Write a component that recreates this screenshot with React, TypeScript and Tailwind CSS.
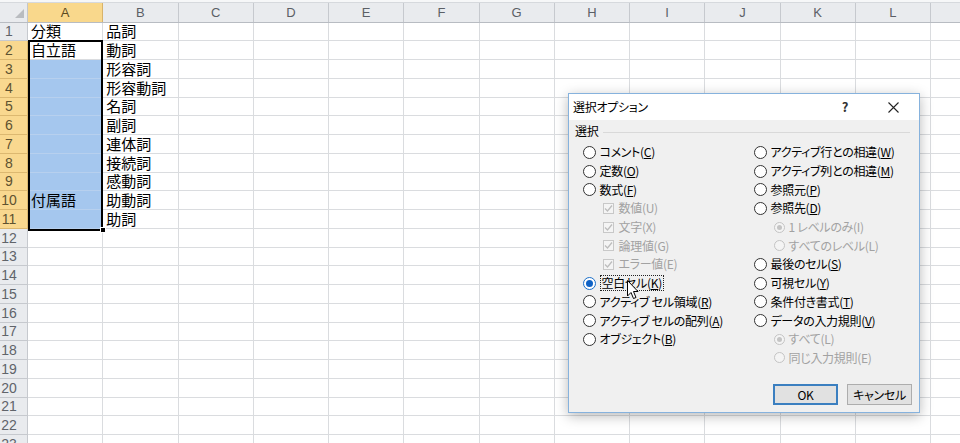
import React from 'react';

const COLS = ['A', 'B', 'C', 'D', 'E', 'F', 'G', 'H', 'I', 'J', 'K', 'L', 'M'];
const DATA: Record<number, [string, string]> = {
  1: ['分類', '品詞'],
  2: ['自立語', '動詞'],
  3: ['', '形容詞'],
  4: ['', '形容動詞'],
  5: ['', '名詞'],
  6: ['', '副詞'],
  7: ['', '連体詞'],
  8: ['', '接続詞'],
  9: ['', '感動詞'],
  10: ['付属語', '助動詞'],
  11: ['', '助詞'],
};
const ROWS = Array.from({ length: 23 }, (_, i) => i + 1);

function Sheet() {
  return (
    <div className="flex flex-col">
      <div className="h-[3px] bg-[#f6f7f8] border-b border-[#d6d9dd]" />
      <div className="flex h-[19.5px] border-b border-[#b8bcc2]">
        <div className="w-[28px] shrink-0 relative bg-[#e9ebee] border-r border-[#c3c6cb]">
          <svg className="absolute left-[15px] top-[6px]" width="9" height="9" viewBox="0 0 9 9">
            <polygon points="9,0 9,9 0,9" fill="#b9bcc0" />
          </svg>
        </div>
        {COLS.map((c) => (
          <div
            key={c}
            className={
              c === 'A'
                ? 'w-[75.25px] shrink-0 flex items-center justify-center border-r border-[#d8b36a] bg-[#f9d88c] text-[13px] text-[#5a4a20]'
                : 'w-[75.25px] shrink-0 flex items-center justify-center border-r border-[#c6c9ce] bg-[#e9ebee] text-[13px] text-[#5b5f66]'
            }
          >
            {c === 'M' ? '' : c}
          </div>
        ))}
      </div>
      {ROWS.map((r) => {
        const sel = r >= 2 && r <= 11;
        const d = DATA[r];
        return (
          <div key={r} className="flex h-[18.75px] shrink-0">
            <div
              className={
                sel
                  ? 'w-[28px] shrink-0 flex items-center justify-center pr-[9px] border-r border-b border-[#dcb870] bg-[#f9d88f] text-[14px] text-[#5e5230] leading-none'
                  : 'w-[28px] shrink-0 flex items-center justify-center pr-[9px] border-r border-b border-[#c6c9ce] bg-[#e9ebee] text-[14px] text-[#60646a] leading-none'
              }
            >
              {r}
            </div>
            {COLS.map((c, ci) => {
              const blue = c === 'A' && r >= 3 && r <= 11;
              const txt = d && ci < 2 ? d[ci] : '';
              return (
                <div
                  key={c}
                  className={
                    blue
                      ? 'w-[75.25px] shrink-0 flex items-center pl-[3px] pt-[1px] border-r border-b border-[#b7d0ee] bg-[#a5c7ee] text-[15px] leading-none text-black whitespace-nowrap'
                      : 'w-[75.25px] shrink-0 flex items-center pl-[3px] pt-[1px] border-r border-b border-[#dadcdf] bg-white text-[15px] leading-none text-black whitespace-nowrap'
                  }
                >
                  {txt}
                </div>
              );
            })}
          </div>
        );
      })}
    </div>
  );
}

function Radio({ checked, disabled, small }: { checked?: boolean; disabled?: boolean; small?: boolean }) {
  const size = small ? 'w-[11px] h-[11px]' : 'w-[13px] h-[13px]';
  if (disabled) {
    return (
      <div className={`${size} shrink-0 rounded-full border border-[#c4c4c4] bg-[#f4f4f4] flex items-center justify-center`}>
        {checked && <div className="w-[5px] h-[5px] rounded-full bg-[#c4c4c4]" />}
      </div>
    );
  }
  return (
    <div
      className={
        checked
          ? `${size} shrink-0 rounded-full border border-[#1a6fc9] bg-white flex items-center justify-center`
          : `${size} shrink-0 rounded-full border border-[#333333] bg-white flex items-center justify-center`
      }
    >
      {checked && <div className="w-[7px] h-[7px] rounded-full bg-[#0f62c5]" />}
    </div>
  );
}

function Check() {
  return (
    <div className="w-[11px] h-[11px] shrink-0 border border-[#c8c8c8] bg-[#f4f4f4] flex items-center justify-center">
      <svg width="9" height="9" viewBox="0 0 9 9">
        <path d="M1 4.5 L3.5 7 L8 1.5" stroke="#bdbdbd" strokeWidth="1.3" fill="none" />
      </svg>
    </div>
  );
}

function Lab({ t, k, disabled }: { t: string; k: string; disabled?: boolean }) {
  if (disabled) {
    return (
      <span className="text-[#a2a2a2] whitespace-nowrap">
        {t}({k})
      </span>
    );
  }
  return (
    <span className="whitespace-nowrap">
      {t}(<span className="underline underline-offset-[1px]">{k}</span>)
    </span>
  );
}

type Item =
  | { kind: 'radio'; t: string; k: string; checked?: boolean; focus?: boolean }
  | { kind: 'check'; t: string; k: string }
  | { kind: 'sub'; t: string; k: string; checked?: boolean };

const LEFT: Item[] = [
  { kind: 'radio', t: 'コメント', k: 'C' },
  { kind: 'radio', t: '定数', k: 'O' },
  { kind: 'radio', t: '数式', k: 'F' },
  { kind: 'check', t: '数値', k: 'U' },
  { kind: 'check', t: '文字', k: 'X' },
  { kind: 'check', t: '論理値', k: 'G' },
  { kind: 'check', t: 'エラー値', k: 'E' },
  { kind: 'radio', t: '空白セル', k: 'K', checked: true, focus: true },
  { kind: 'radio', t: 'アクティブ セル領域', k: 'R' },
  { kind: 'radio', t: 'アクティブ セルの配列', k: 'A' },
  { kind: 'radio', t: 'オブジェクト', k: 'B' },
];

const RIGHT: Item[] = [
  { kind: 'radio', t: 'アクティブ行との相違', k: 'W' },
  { kind: 'radio', t: 'アクティブ列との相違', k: 'M' },
  { kind: 'radio', t: '参照元', k: 'P' },
  { kind: 'radio', t: '参照先', k: 'D' },
  { kind: 'sub', t: '1 レベルのみ', k: 'I', checked: true },
  { kind: 'sub', t: 'すべてのレベル', k: 'L' },
  { kind: 'radio', t: '最後のセル', k: 'S' },
  { kind: 'radio', t: '可視セル', k: 'Y' },
  { kind: 'radio', t: '条件付き書式', k: 'T' },
  { kind: 'radio', t: 'データの入力規則', k: 'V' },
  { kind: 'sub', t: 'すべて', k: 'L', checked: true },
  { kind: 'sub', t: '同じ入力規則', k: 'E' },
];

function Row({ it }: { it: Item }) {
  if (it.kind === 'check') {
    return (
      <div className="h-[18.7px] flex items-center pl-[20px] gap-[5px]">
        <Check />
        <Lab t={it.t} k={it.k} disabled />
      </div>
    );
  }
  if (it.kind === 'sub') {
    return (
      <div className="h-[18.7px] flex items-center pl-[20px] gap-[4px]">
        <Radio small disabled checked={it.checked} />
        <Lab t={it.t} k={it.k} disabled />
      </div>
    );
  }
  return (
    <div className="h-[18.7px] flex items-center gap-[4px]">
      <Radio checked={it.checked} />
      {it.focus ? (
        <span className="border border-dotted border-[#222] px-[1px] leading-[14px]">
          <Lab t={it.t} k={it.k} />
        </span>
      ) : (
        <Lab t={it.t} k={it.k} />
      )}
    </div>
  );
}

function Dialog() {
  return (
    <div className="absolute left-[568px] top-[93px] w-[352px] h-[320px] border border-[#86b2dd] bg-[#f0f0f0] shadow-[0_3px_12px_rgba(0,0,0,0.28)] flex flex-col text-[12px] tracking-[-0.3px] text-black [font-feature-settings:'palt'] [font-family:'Noto_Sans_CJK_JP','Liberation_Sans',sans-serif]">
      <div className="h-[26px] shrink-0 bg-white flex items-center pl-[4px]">
        <span>選択オプション</span>
        <div className="ml-auto flex items-center">
          <span className="w-[24px] text-center text-[13px] font-bold text-[#333]">?</span>
          <div className="ml-[13px] mr-[3px] w-[46px] flex justify-center">
            <svg width="11" height="11" viewBox="0 0 11 11">
              <path d="M0.5 0.5 L10.5 10.5 M10.5 0.5 L0.5 10.5" stroke="#222" strokeWidth="1.1" />
            </svg>
          </div>
        </div>
      </div>
      <div className="flex-1 flex flex-col pt-[4px]">
        <div className="flex items-center h-[14px] pl-[6px] pr-[9px]">
          <span>選択</span>
          <div className="flex-1 h-px bg-[#d9d9d9] ml-[5px] mt-[2px]" />
        </div>
        <div className="grid grid-cols-[171px_1fr] pl-[13.5px] mt-[5px]">
          <div className="flex flex-col">
            {LEFT.map((it, i) => (
              <Row key={i} it={it} />
            ))}
          </div>
          <div className="flex flex-col">
            {RIGHT.map((it, i) => (
              <Row key={i} it={it} />
            ))}
          </div>
        </div>
        <div className="mt-auto flex justify-end gap-[9px] pr-[7px] pb-[7px]">
          <div className="w-[65px] h-[21px] border-2 border-[#3b7fc0] bg-[#e1e1e1] flex items-center justify-center">OK</div>
          <div className="w-[65px] h-[21px] border border-[#adadad] bg-[#e1e1e1] flex items-center justify-center">キャンセル</div>
        </div>
      </div>
    </div>
  );
}

export default function App() {
  return (
    <div className="relative w-[960px] h-[443px] overflow-hidden bg-white [font-family:'Liberation_Sans','Noto_Sans_CJK_JP',sans-serif]">
      <Sheet />
      <div className="absolute left-[28px] top-[39.5px] w-[75px] h-[191px] border-2 border-black pointer-events-none" />
      <div className="absolute left-[100px] top-[226.5px] w-[6px] h-[6px] bg-black border border-white" />
      <Dialog />
      <svg className="absolute left-[627px] top-[280px]" width="13" height="21" viewBox="0 0 13 21">
        <path d="M0.5 0.5 L0.5 16 L4 12.5 L6.5 18.5 L9 17.5 L6.5 11.5 L11 11.5 Z" fill="white" stroke="black" strokeWidth="1" />
      </svg>
    </div>
  );
}
